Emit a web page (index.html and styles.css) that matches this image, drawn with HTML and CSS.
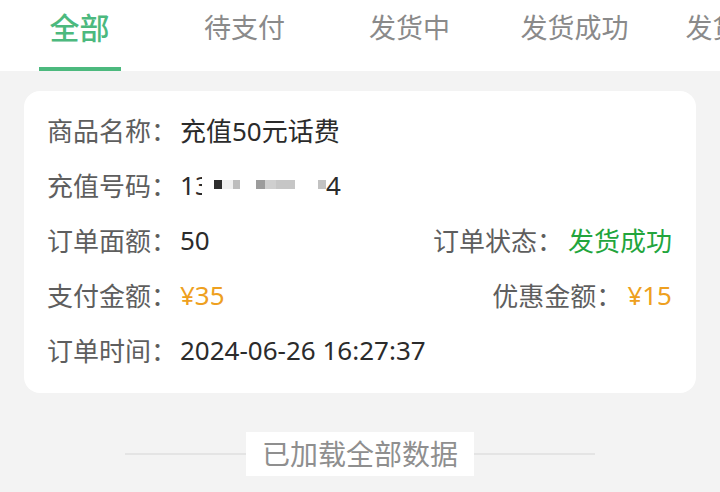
FILE: index.html
```html
<html>
<head>
    <meta charset="utf-8">
    <link rel="stylesheet" href="styles.css">
</head>
<body>
    <div class="tabs">
        <div class="tab active">全部</div>
        <div class="tab">待支付</div>
        <div class="tab">发货中</div>
        <div class="tab">发货成功</div>
        <div class="tab">发货失败</div>
    </div>
    <div class="content">
        <div class="card">
            <div class="row">
                <span class="label">商品名称：</span>
                <span class="value">充值50元话费</span>
            </div>
            <div class="row">
                <span class="label">充值号码：</span>
                <span class="value phone">
                    <span>1</span><span class="cut">3</span>
                    <i class="px" style="margin-left:12px;width:8px;background:#2e2e2e"></i>
                    <i class="px" style="width:11px;background:#f0f0f0"></i>
                    <i class="px" style="width:7px;background:#bdbdbd"></i>
                    <i class="px" style="margin-left:16px;width:9px;background:#9c9c9c"></i>
                    <i class="px" style="width:11px;background:#cfcfcf"></i>
                    <i class="px" style="width:19px;background:#c6c6c6"></i>
                    <i class="px" style="margin-left:23px;width:8px;background:#c2c2c2"></i>
                    <span>4</span>
                </span>
            </div>
            <div class="row split">
                <div><span class="label">订单面额：</span><span class="value">50</span></div>
                <div><span class="label short">订单状态：</span><span class="value green">发货成功</span></div>
            </div>
            <div class="row split">
                <div><span class="label">支付金额：</span><span class="value orange">¥35</span></div>
                <div><span class="label short">优惠金额：</span><span class="value orange">¥15</span></div>
            </div>
            <div class="row">
                <span class="label">订单时间：</span>
                <span class="value">2024-06-26 16:27:37</span>
            </div>
        </div>
        <div class="end">
            <span class="end_text">已加载全部数据</span>
        </div>
    </div>
</body>
</html>
```

FILE: styles.css
```css
html {
    box-sizing: border-box;
    height: 100%;
}

body {
    margin: 0;
    width: 720px;
    height: 492px;
    overflow: hidden;
    background-color: #f3f3f3;
    font-family: "Noto Sans", "Noto Sans CJK SC", sans-serif;
}

.tabs {
    display: flex;
    height: 71px;
    background-color: #ffffff;
    margin-left: -3px;
    white-space: nowrap;
}

.tab {
    flex: none;
    width: 165px;
    text-align: center;
    font-size: 27px;
    line-height: 56px;
    color: #8a8a8a;
    position: relative;
}

    .tab.active {
        font-size: 30px;
        font-weight: 500;
        color: #4cb97e;
    }

        .tab.active:after {
            content: "";
            position: absolute;
            left: 42px;
            width: 82px;
            bottom: 0;
            height: 4px;
            background-color: #4cb97e;
        }

.content {
    padding: 20px 24px 0 24px;
}

.card {
    background-color: #ffffff;
    border-radius: 16px;
    padding: 11px 24px 16px 23px;
}

.row {
    display: flex;
    align-items: center;
    height: 55px;
    font-size: 26px;
}

    .row.split {
        justify-content: space-between;
    }

        .row.split > div {
            display: flex;
            align-items: center;
        }

.label {
    display: inline-block;
    width: 133px;
    color: #5e5e5e;
}

    .label.short {
        width: auto;
        margin-right: 5px;
    }

.value {
    color: #2b2b2b;
}

.green {
    color: #22a53c;
}

.orange {
    color: #eea020;
}

.phone {
    display: flex;
    align-items: center;
}

.cut {
    display: inline-block;
    width: 7px;
    overflow: hidden;
}

.px {
    display: inline-block;
    height: 9px;
}

.end {
    display: flex;
    justify-content: center;
    align-items: center;
    margin: 39px 101px 0 101px;
    height: 44px;
    background: linear-gradient(#f3f3f3 21px, #e4e4e4 21px, #e4e4e4 23px, #f3f3f3 23px);
}

.end_text {
    display: inline-block;
    width: 228px;
    height: 44px;
    line-height: 44px;
    text-align: center;
    background-color: #ffffff;
    color: #8f8f8f;
    font-size: 28px;
}
```
